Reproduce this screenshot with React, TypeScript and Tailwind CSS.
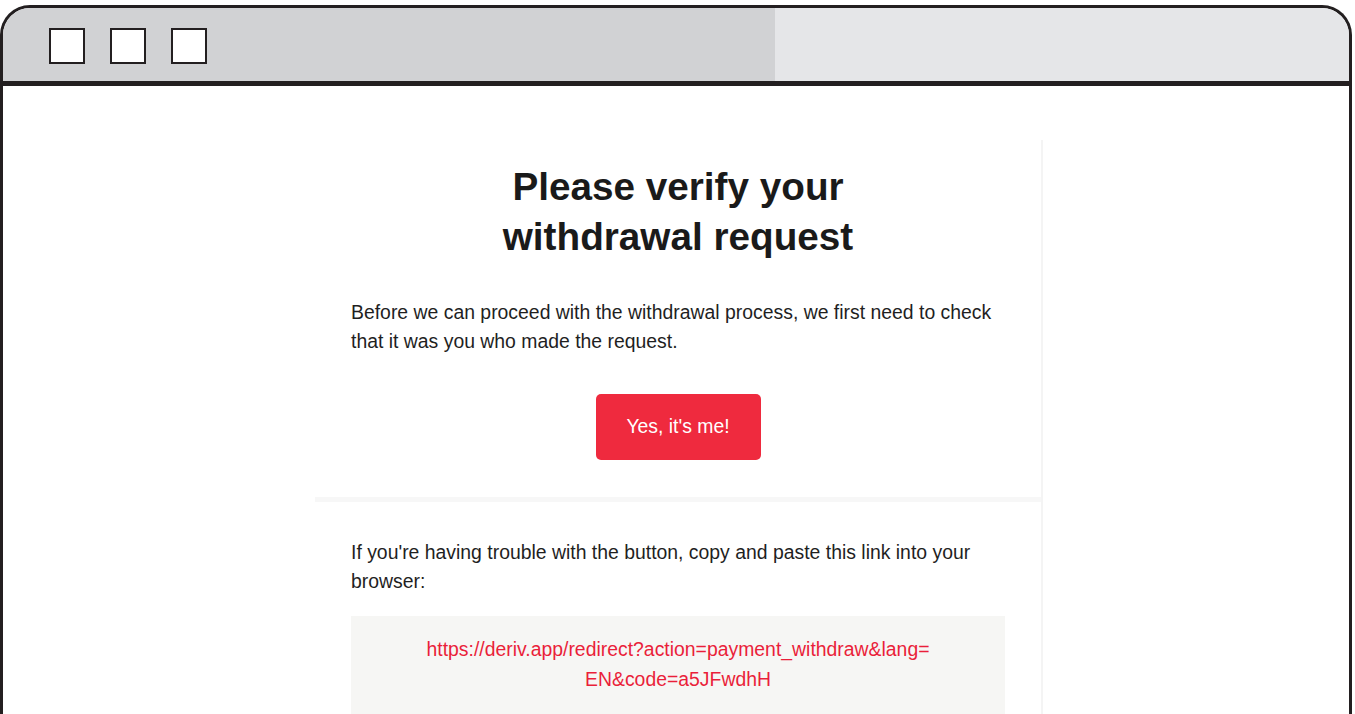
import React from "react";

export default function App() {
  return (
    <div
      className="w-[1355px] h-[714px] overflow-hidden bg-white pt-[5px]"
      style={{ fontFamily: '"Liberation Sans", Arial, sans-serif' }}
    >
      <div className="w-[1352px] h-[720px] border-[3px] border-b-0 border-[#231f20] rounded-t-[30px] overflow-hidden flex flex-col bg-white">
        {/* title bar */}
        <div className="flex h-[73px] shrink-0">
          <div className="w-[772px] bg-[#d1d2d4] flex items-start gap-[25px] pl-[46px] pt-[20px]">
            <div className="w-[36px] h-[36px] border-[2.5px] border-[#231f20] bg-white" />
            <div className="w-[36px] h-[36px] border-[2.5px] border-[#231f20] bg-white" />
            <div className="w-[36px] h-[36px] border-[2.5px] border-[#231f20] bg-white" />
          </div>
          <div className="flex-1 bg-[#e5e6e8]" />
        </div>
        <div className="h-[5px] bg-[#231f20] shrink-0" />

        {/* content */}
        <div className="flex-1 pl-[312px] pt-[54px]">
          <div className="w-[728px] border-r-[2px] border-[#f4f4f4]">
            <div className="px-[36px] pt-[22px] pb-[37px]">
              <h1 className="text-center font-bold text-[38.7px] leading-[50px] text-[#1a1a1a]">
                Please verify your
                <br />
                withdrawal request
              </h1>
              <p className="mt-[36px] text-[19.4px] leading-[29px] text-[#1f1f1f]">
                Before we can proceed with the withdrawal process, we first need to check that it was you who made the request.
              </p>
              <div className="mt-[38px] flex justify-center">
                <div className="w-[165px] h-[66px] rounded-[5px] bg-[#ef2a3e] text-white text-[19.4px] flex items-center justify-center">
                  Yes, it's me!
                </div>
              </div>
            </div>
            <div className="h-[5px] bg-[#f7f7f7]" />
            <div className="px-[36px] pt-[36px]">
              <p className="text-[19.4px] leading-[29px] text-[#1f1f1f]">
                If you're having trouble with the button, copy and paste this link into your browser:
              </p>
              <div className="mt-[20px] bg-[#f6f6f4] pt-[18px] pb-[40px] text-center text-[19.4px] leading-[30px] text-[#ea1f3a]">
                https://deriv.app/redirect?action=payment_withdraw&amp;lang=
                <br />
                EN&amp;code=a5JFwdhH
              </div>
            </div>
          </div>
        </div>
      </div>
    </div>
  );
}
